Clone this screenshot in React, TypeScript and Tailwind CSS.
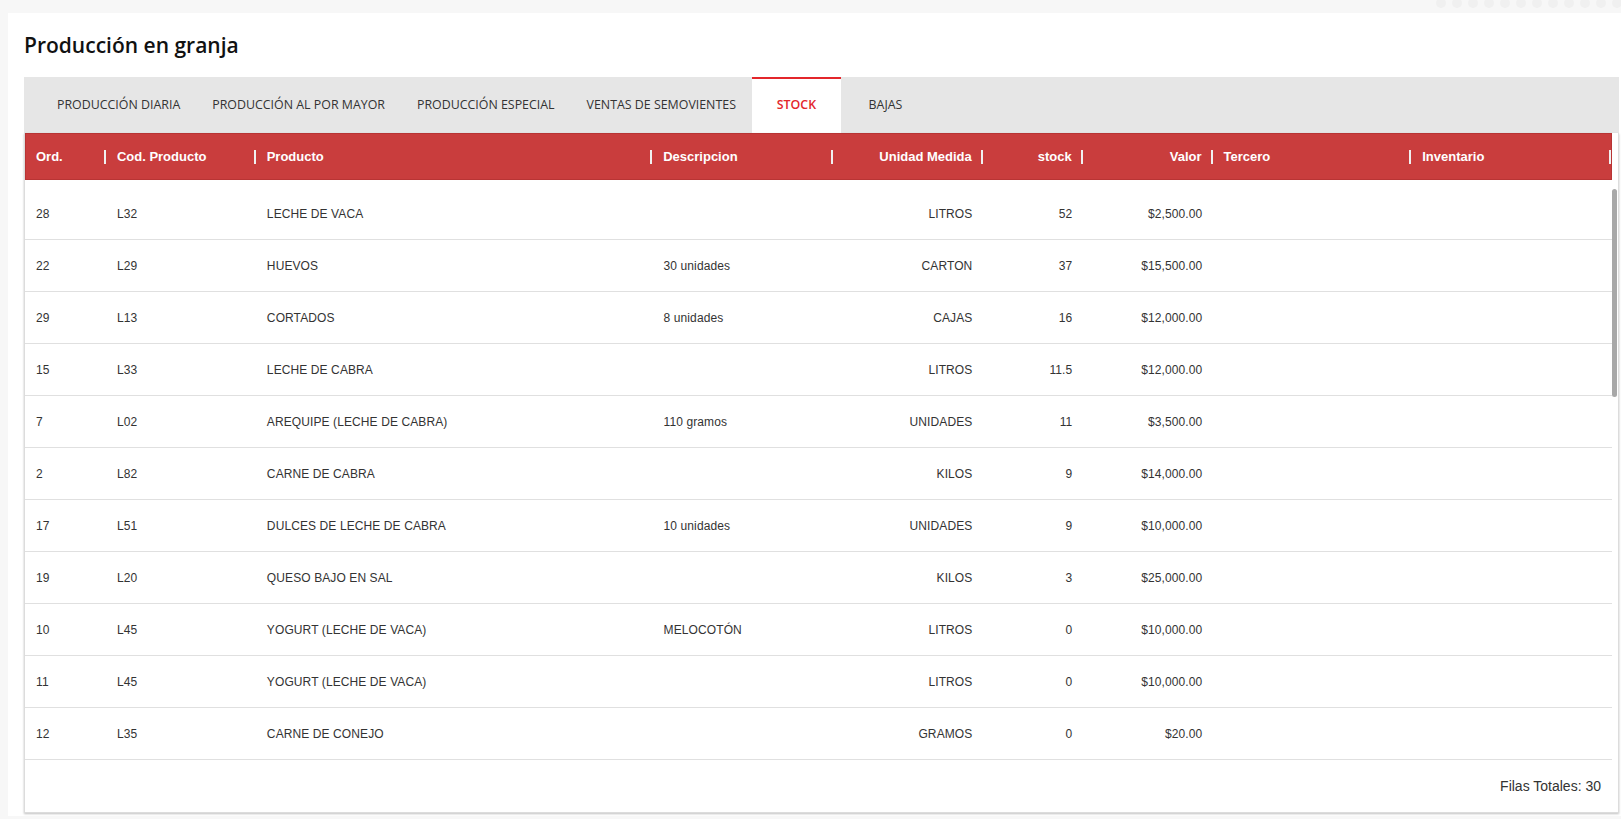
import React from "react";

const tabs = [
  "PRODUCCIÓN DIARIA",
  "PRODUCCIÓN AL POR MAYOR",
  "PRODUCCIÓN ESPECIAL",
  "VENTAS DE SEMOVIENTES",
  "STOCK",
  "BAJAS",
];

type Col = { label: string; w: string; right?: boolean };

const cols: Col[] = [
  { label: "Ord.", w: "w-[81px]" },
  { label: "Cod. Producto", w: "w-[150px]" },
  { label: "Producto", w: "w-[397px]" },
  { label: "Descripcion", w: "w-[181px]" },
  { label: "Unidad Medida", w: "w-[150px]", right: true },
  { label: "stock", w: "w-[100px]", right: true },
  { label: "Valor", w: "w-[130px]", right: true },
  { label: "Tercero", w: "w-[199px]" },
  { label: "Inventario", w: "w-[200px]" },
];

const rows = [
  ["28", "L32", "LECHE DE VACA", "", "LITROS", "52", "$2,500.00", "", ""],
  ["22", "L29", "HUEVOS", "30 unidades", "CARTON", "37", "$15,500.00", "", ""],
  ["29", "L13", "CORTADOS", "8 unidades", "CAJAS", "16", "$12,000.00", "", ""],
  ["15", "L33", "LECHE DE CABRA", "", "LITROS", "11.5", "$12,000.00", "", ""],
  ["7", "L02", "AREQUIPE (LECHE DE CABRA)", "110 gramos", "UNIDADES", "11", "$3,500.00", "", ""],
  ["2", "L82", "CARNE DE CABRA", "", "KILOS", "9", "$14,000.00", "", ""],
  ["17", "L51", "DULCES DE LECHE DE CABRA", "10 unidades", "UNIDADES", "9", "$10,000.00", "", ""],
  ["19", "L20", "QUESO BAJO EN SAL", "", "KILOS", "3", "$25,000.00", "", ""],
  ["10", "L45", "YOGURT (LECHE DE VACA)", "MELOCOTÓN", "LITROS", "0", "$10,000.00", "", ""],
  ["11", "L45", "YOGURT (LECHE DE VACA)", "", "LITROS", "0", "$10,000.00", "", ""],
  ["12", "L35", "CARNE DE CONEJO", "", "GRAMOS", "0", "$20.00", "", ""],
];

export default function App() {
  return (
    <div className="relative min-h-screen bg-[#f7f7f7] font-['Liberation_Sans',Arial,sans-serif]">
      {/* faint dotted background at the top right */}
      <svg className="absolute right-0 top-0" width="520" height="13" viewBox="0 0 520 13">
        {Array.from({ length: 12 }).map((_, i) => (
          <circle key={i} cx={340 + i * 16} cy={3} r={5} fill="#f0f0f0" />
        ))}
      </svg>

      <div className="relative pl-2 pt-[13px]">
        <div className="bg-white pb-[3px] pl-4 pr-[2px]">
          {/* Title */}
          <div className="flex h-[64px] items-center pt-[2px]">
            <h1 className="font-['Open_Sans',sans-serif] text-[21px] font-semibold text-[#111]">
              Producción en granja
            </h1>
          </div>

          {/* Tabs */}
          <div className="flex h-[56px] bg-[#e6e6e6] pl-[17px] font-['Open_Sans',sans-serif] text-[12.4px]">
            {tabs.map((t) => {
              const active = t === "STOCK";
              return (
                <div
                  key={t}
                  className={
                    active
                      ? "flex min-w-[89px] items-center justify-center border-t-2 border-[#e3262b] bg-white px-4 pb-[2px] font-semibold text-[#e3262b]"
                      : "flex min-w-[89px] items-center justify-center px-4 text-[#333]"
                  }
                >
                  {t}
                </div>
              );
            })}
          </div>

          {/* Table card */}
          <div className="relative border border-t-0 border-[#dcdcdc] bg-white shadow-[0_1px_2px_rgba(0,0,0,0.25)]">
            <div className="pr-[6px]">
              {/* Header */}
              <div className="flex h-[47px] border border-[#b83434] bg-[#c93d3d]">
                {cols.map((c, i) => (
                  <div key={i} className={`flex items-center ${c.w} ${i === 0 ? "-ml-px" : ""}`}>
                    <span
                      className={`flex-1 text-[13px] font-bold text-white ${
                        c.right ? "pr-[9px] text-right" : "pl-[11px]"
                      }`}
                    >
                      {c.label}
                    </span>
                    <span className="h-[14px] w-[2px] bg-[#f0f0f0]" />
                  </div>
                ))}
              </div>

              {/* Body */}
              <div className="pt-2">
                {rows.map((r, ri) => (
                  <div key={ri} className="flex h-[52px] border-b border-[#e0e0e0]">
                    {cols.map((c, ci) => (
                      <div
                        key={ci}
                        className={`flex items-center text-[12px] tracking-[0.1px] text-[#333] ${c.w} ${
                          c.right ? "justify-end pr-[11px]" : "pl-[11px]"
                        }`}
                      >
                        {r[ci]}
                      </div>
                    ))}
                  </div>
                ))}
              </div>

              {/* Footer */}
              <div className="flex h-[52px] items-center justify-end pr-[11px] text-[14px] text-[#333]">
                Filas Totales: 30
              </div>
            </div>

            {/* scrollbar thumb */}
            <div className="absolute right-[1px] top-[56px] h-[208px] w-[5px] rounded-full bg-[#a8a8a8]" />
          </div>
        </div>
      </div>
    </div>
  );
}
